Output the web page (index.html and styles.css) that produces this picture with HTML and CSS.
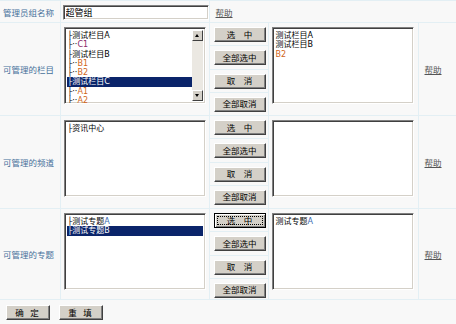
FILE: index.html
```html
<!DOCTYPE html>
<html lang="zh-CN">
<head>
    <meta charset="UTF-8">
    <title>管理员组</title>
    <link rel="stylesheet" href="styles.css">
</head>
<body>
    <form class="group-form">
        <table class="form-table">
            <colgroup>
                <col class="c-label">
                <col class="c-field">
                <col class="c-actions">
                <col class="c-field2">
                <col class="c-help">
            </colgroup>
            <tr class="row-name">
                <td class="label">管理员组名称</td>
                <td class="name-cell"><input type="text" class="name-input" value="超管组"></td>
                <td class="help help-top" colspan="3"><a href="#">帮助</a></td>
            </tr>

            <tr class="row-pick">
                <td class="label">可管理的栏目</td>
                <td class="field">
                    <div class="listbox with-scroll">
                        <div class="list-items">
                            <div class="item">├测试栏目A</div>
                            <div class="item">├··<span class="c-purple">C1</span></div>
                            <div class="item">├测试栏目B</div>
                            <div class="item">├··<span class="c-orange">B1</span></div>
                            <div class="item">├··<span class="c-orange">B2</span></div>
                            <div class="item selected">├测试栏目C</div>
                            <div class="item">├··<span class="c-orange">A1</span></div>
                            <div class="item">├··<span class="c-orange">A2</span></div>
                        </div>
                        <div class="scrollbar">
                            <span class="sb-btn sb-up"></span>
                            <span class="sb-track"></span>
                            <span class="sb-btn sb-down"></span>
                        </div>
                    </div>
                </td>
                <td class="actions">
                    <div class="act"><button type="button" class="btn">选　中</button></div>
                    <div class="act"><button type="button" class="btn">全部选中</button></div>
                    <div class="act"><button type="button" class="btn">取　消</button></div>
                    <div class="act"><button type="button" class="btn">全部取消</button></div>
                </td>
                <td class="field">
                    <div class="listbox">
                        <div class="list-items">
                            <div class="item">测试栏目A</div>
                            <div class="item">测试栏目B</div>
                            <div class="item"><span class="c-orange">B2</span></div>
                        </div>
                    </div>
                </td>
                <td class="help"><a href="#">帮助</a></td>
            </tr>

            <tr class="row-pick">
                <td class="label">可管理的频道</td>
                <td class="field">
                    <div class="listbox">
                        <div class="list-items">
                            <div class="item">├资讯中心</div>
                        </div>
                    </div>
                </td>
                <td class="actions">
                    <div class="act"><button type="button" class="btn">选　中</button></div>
                    <div class="act"><button type="button" class="btn">全部选中</button></div>
                    <div class="act"><button type="button" class="btn">取　消</button></div>
                    <div class="act"><button type="button" class="btn">全部取消</button></div>
                </td>
                <td class="field">
                    <div class="listbox">
                        <div class="list-items"></div>
                    </div>
                </td>
                <td class="help"><a href="#">帮助</a></td>
            </tr>

            <tr class="row-pick row-last">
                <td class="label">可管理的专题</td>
                <td class="field">
                    <div class="listbox">
                        <div class="list-items">
                            <div class="item">├测试专题<span class="c-blue">A</span></div>
                            <div class="item selected">├测试专题B</div>
                        </div>
                    </div>
                </td>
                <td class="actions">
                    <div class="act"><button type="button" class="btn focused">选　中</button></div>
                    <div class="act"><button type="button" class="btn">全部选中</button></div>
                    <div class="act"><button type="button" class="btn">取　消</button></div>
                    <div class="act"><button type="button" class="btn">全部取消</button></div>
                </td>
                <td class="field">
                    <div class="listbox">
                        <div class="list-items">
                            <div class="item">测试专题<span class="c-blue">A</span></div>
                        </div>
                    </div>
                </td>
                <td class="help"><a href="#">帮助</a></td>
            </tr>
        </table>

        <div class="form-buttons">
            <button type="submit" class="btn btn-wide">确 定</button>
            <button type="reset" class="btn btn-wide">重 填</button>
        </div>
    </form>
</body>
</html>
```

FILE: styles.css
```css
:root {
    --page-bg: #f8f8f8;
    --grid-line: #e3eff4;
    --label-color: #46709a;
    --face: #d4d0c8;
    --shadow: #808080;
    --dark: #404040;
    --select-bg: #0a246a;
}

* {
    margin: 0;
    padding: 0;
    box-sizing: border-box;
}

body {
    font-family: "DejaVu Sans", "Noto Sans CJK SC", sans-serif;
    font-size: 8px;
    background-color: var(--page-bg);
    color: #000;
    width: 456px;
    height: 324px;
    overflow: hidden;
}

.form-table {
    width: 456px;
    table-layout: fixed;
    border-collapse: collapse;
    border-top: 1px solid #d6e8f0;
}

.c-label  { width: 60px; }
.c-field  { width: 149px; }
.c-actions { width: 59px; }
.c-field2 { width: 150px; }
.c-help   { width: 38px; }

.form-table td {
    border: 1px solid var(--grid-line);
    vertical-align: top;
}

.form-table tr > td:first-child {
    border-left: none;
}

.form-table tr > td:last-child {
    border-right: none;
}

.row-name {
    height: 22px;
}

.row-pick {
    height: 93px;
}

.row-last {
    height: 91px;
}

.form-table td.label {
    vertical-align: middle;
    padding-left: 3px;
    font-size: 8.5px;
    color: var(--label-color);
    white-space: nowrap;
}

.name-cell {
    padding: 4px 0 0 2px;
}

.name-input {
    display: block;
    width: 146px;
    height: 15px;
    padding: 0 2px;
    font-family: inherit;
    font-size: 9px;
    background: #fff;
    border: 1px solid;
    border-color: var(--shadow) #fff #fff var(--shadow);
    box-shadow: inset 1px 1px 0 var(--dark), inset -1px -1px 0 var(--face);
    outline: none;
}

.form-table td.help {
    vertical-align: middle;
    padding-left: 6px;
}

.form-table td.help-top {
    padding-top: 1px;
}

.help a {
    color: #555;
    font-size: 8.5px;
    text-decoration: underline;
}

.field {
    padding: 4px 0 0 3px;
}

.listbox {
    position: relative;
    width: 142px;
    height: 77px;
    background: #fff;
    border: 1px solid;
    border-color: var(--shadow) #fff #fff var(--shadow);
    box-shadow: inset 1px 1px 0 var(--dark), inset -1px -1px 0 var(--face);
    padding: 3px 2px 2px 2px;
    overflow: hidden;
}

.with-scroll .list-items {
    margin-right: 11px;
}

.item {
    height: 9.3px;
    line-height: 9.3px;
    white-space: nowrap;
    padding-left: 1px;
}

.item.selected {
    background: var(--select-bg);
    color: #fff;
}

.c-purple { color: #8a2a6a; }
.c-orange { color: #d0661a; }
.c-blue   { color: #3a6ab0; }

.scrollbar {
    position: absolute;
    top: 2px;
    right: 2px;
    bottom: 2px;
    width: 11px;
    display: flex;
    flex-direction: column;
    background: #ebe8e2;
}

.sb-track {
    flex: 1;
}

.sb-btn {
    position: relative;
    height: 11px;
    background: var(--face);
    border: 1px solid;
    border-color: #fff var(--dark) var(--dark) #fff;
}

.sb-btn::after {
    content: "";
    position: absolute;
    left: 2px;
    width: 0;
    height: 0;
    border-left: 2.5px solid transparent;
    border-right: 2.5px solid transparent;
}

.sb-up::after {
    top: 3px;
    border-bottom: 3px solid #000;
}

.sb-down::after {
    top: 3px;
    border-top: 3px solid #000;
}

.actions {
    padding: 0;
}

.act {
    height: 23.3px;
    padding: 4px 0 0 4px;
    border-bottom: 1px solid var(--grid-line);
}

.act:last-child {
    height: 19px;
    border-bottom: none;
}

.btn {
    display: block;
    width: 52px;
    height: 15px;
    font-family: inherit;
    font-size: 8.5px;
    line-height: 12px;
    color: #000;
    background: var(--face);
    border: 1px solid;
    border-color: #fff var(--dark) var(--dark) #fff;
    box-shadow: inset -1px -1px 0 var(--shadow);
    cursor: pointer;
    white-space: nowrap;
}

.btn.focused {
    position: relative;
    border-color: #000;
    box-shadow: inset 1px 1px 0 #fff, inset -1px -1px 0 var(--shadow);
}

.btn.focused::after {
    content: "";
    position: absolute;
    top: 2px;
    left: 2px;
    right: 2px;
    bottom: 2px;
    border: 1px dotted #000;
}

.form-buttons {
    display: flex;
    gap: 9px;
    padding: 5px 0 0 6px;
}

.btn-wide {
    width: 44px;
    height: 15px;
    letter-spacing: 2px;
}
```
